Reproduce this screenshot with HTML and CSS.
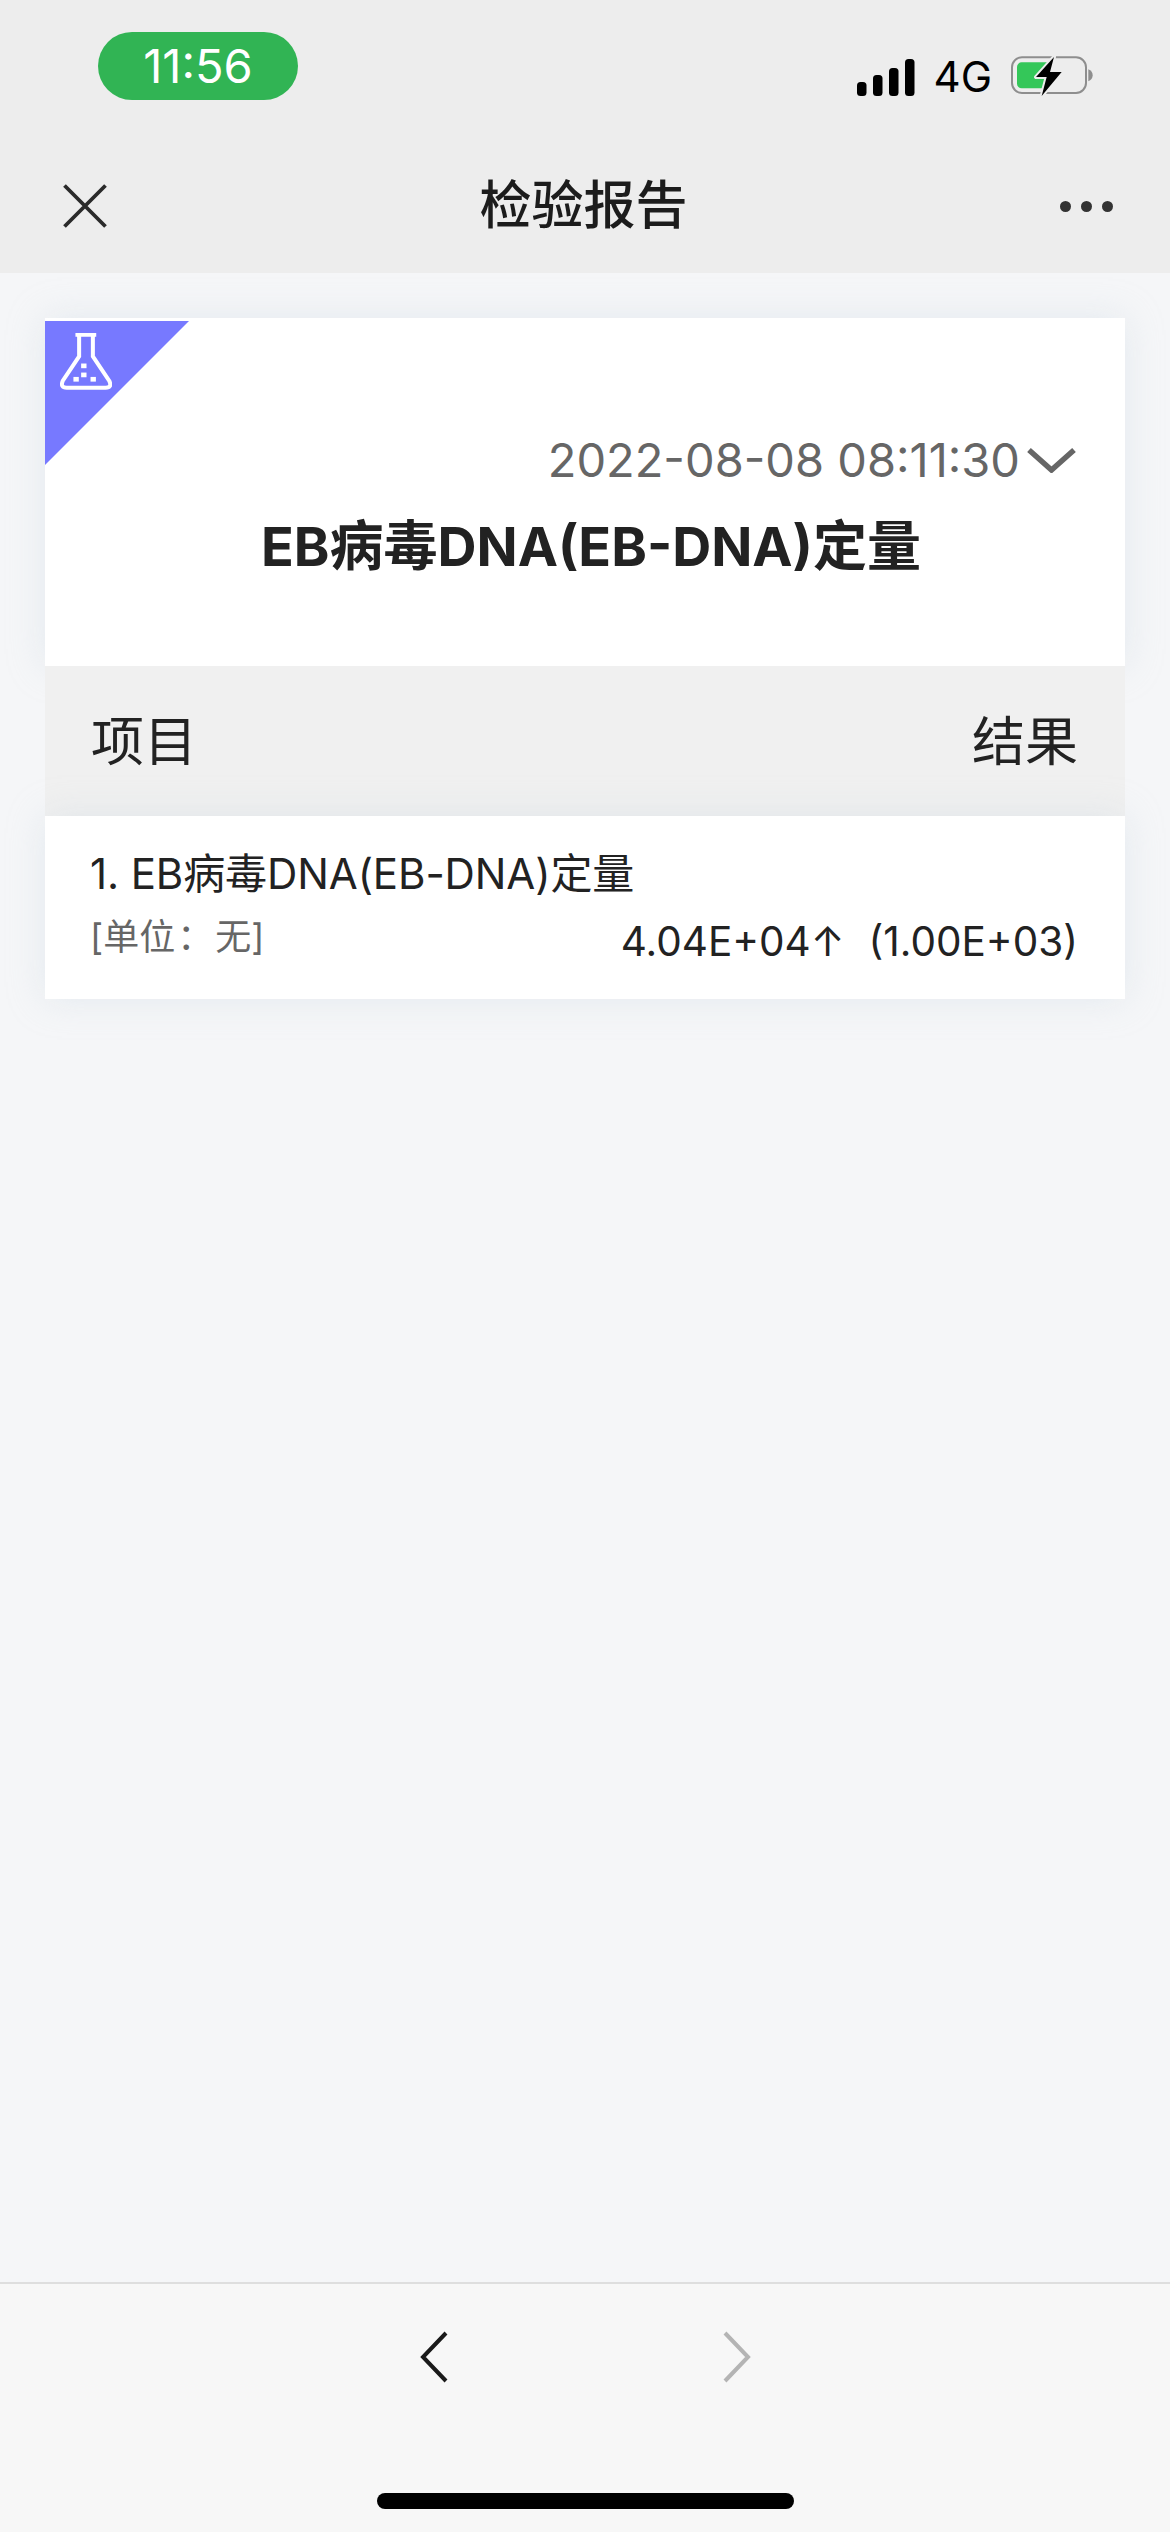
FILE: index.html
```html
<!DOCTYPE html>
<html lang="zh">
<head>
<meta charset="utf-8">
<title>检验报告</title>
<link rel="stylesheet" href="styles.css">
</head>
<body>
<div class="page">
  <header class="topbar">
    <div class="status">
      <div class="time">11:56</div>
      <div class="indicators">
        <svg class="signal" width="58" height="37" viewBox="0 0 58 37"><rect x="0" y="23" width="9.5" height="14" rx="3.5"/><rect x="16" y="16" width="9.5" height="21" rx="3.5"/><rect x="32" y="9" width="9.5" height="28" rx="3.5"/><rect x="48" y="0" width="9.5" height="37" rx="3.5"/></svg>
        <span class="network">4G</span>
        <svg class="battery" width="82" height="42" viewBox="0 0 246 126"><rect x="3" y="4" width="222" height="107" rx="30" fill="none" stroke="#8e8e8e" stroke-width="6"/><path d="M232 40c8 3 13 10 13 18s-5 15-13 18z" fill="#8e8e8e"/><rect x="18" y="19" width="105" height="78" rx="14" fill="#34c759"/><path d="M129 3 L75 63 H107 L92 120 L152 48 H117 Z" fill="#000" stroke="#ededed" stroke-width="12" paint-order="stroke" stroke-linejoin="round"/></svg>
      </div>
    </div>
    <nav class="nav">
      <svg class="close" width="44" height="44" viewBox="0 0 44 44"><path d="M1.500 1.500 42.500 42.500M42.500 1.500 1.500 42.500" stroke="#2a2a2a" stroke-width="3.800" fill="none"/></svg>
      <h1 class="nav-title">检验报告</h1>
      <div class="dots"><i></i><i></i><i></i></div>
    </nav>
  </header>

  <main class="content">
    <section class="card-head">
      <div class="ribbon">
        <svg class="flask" width="52" height="57" viewBox="90 100 155 170"><path d="M136 105H198M147 105V170L98 243Q90 263 110 263H226Q246 263 237 243L188 170V105" fill="none" stroke="#fff" stroke-width="12"/><g fill="#fff"><rect x="153" y="191" width="16" height="14"/><rect x="153" y="218" width="16" height="14"/><rect x="130" y="231" width="16" height="14"/><rect x="181" y="231" width="16" height="14"/></g></svg>
      </div>
      <div class="date-row">
        <span class="date">2022-08-08 08:11:30</span>
        <svg class="chev-down" width="49" height="26" viewBox="0 0 49 26"><path d="M2 3 24.500 23 47 3" fill="none" stroke="#666" stroke-width="5.500"/></svg>
      </div>
      <h2 class="report-title">EB病毒DNA(EB-DNA)定量</h2>
    </section>
    <section class="table-head">
      <span>项目</span>
      <span>结果</span>
    </section>
    <section class="row">
      <div class="row-name">1. EB病毒DNA(EB-DNA)定量</div>
      <div class="row-detail">
        <span class="unit">[单位<span class="unit-colon">：</span>无]</span>
        <span class="value">4.04E+04↑<span class="value-gap"></span>(1.00E+03)</span>
      </div>
    </section>
  </main>

  <footer class="toolbar">
    <div class="toolbar-btns">
      <svg width="28" height="52" viewBox="0 0 28 52"><path d="M26 2 3 26 26 50" fill="none" stroke="#1a1a1a" stroke-width="4"/></svg>
      <svg width="28" height="52" viewBox="0 0 28 52"><path d="M2 2 25 26 2 50" fill="none" stroke="#b4b4b4" stroke-width="4"/></svg>
    </div>
    <div class="home-bar"></div>
  </footer>
</div>
</body>
</html>
```
FILE: styles.css
```css
* { box-sizing: border-box; }
html, body { margin: 0; padding: 0; }
body {
  font-family: Inter, "Noto Sans CJK SC", sans-serif;
  color: #222;
  background: #f5f6f8;
}
.page {
  width: 1170px;
  height: 2532px;
  display: flex;
  flex-direction: column;
  overflow: hidden;
}
.topbar { height: 273px; background: #ededed; flex: none; }
.status {
  height: 133px;
  padding: 32px 77px 0 98px;
  display: flex;
  justify-content: space-between;
  align-items: flex-start;
}
.time {
  width: 200px;
  height: 68px;
  border-radius: 34px;
  background: #31b454;
  color: #fff;
  font-size: 47px;
  line-height: 68px;
  text-align: center;
}
.indicators {
  display: flex;
  align-items: center;
  gap: 19px;
  margin-top: 24px;
}
.network { font-size: 42px; line-height: 40px; color: #000; }
.nav {
  height: 140px;
  padding: 6px 57px 0 63px;
  display: flex;
  align-items: center;
  justify-content: space-between;
}
.nav-title {
  margin: 0;
  font-size: 52px;
  line-height: 60px;
  font-weight: 500;
  color: #1c1c1c;
}
.dots { display: flex; gap: 10px; width: 53px; }
.dots i { width: 11px; height: 11px; border-radius: 50%; background: #333; }

.content {
  flex: 1;
  padding: 45px 45px 0;
  background: #f5f6f8;
}
.card-head, .row { box-shadow: 0 0 34px rgba(200, 212, 224, .38); }
.card-head {
  position: relative;
  height: 348px;
  background: #fff;
  padding-top: 113px;
}
.ribbon {
  position: absolute;
  left: 0;
  top: 3px;
  width: 144px;
  height: 144px;
  background: #7779ff;
  clip-path: polygon(0 0, 100% 0, 0 100%);
}
.flask { position: absolute; left: 15px; top: 12px; }
.date-row {
  display: flex;
  justify-content: flex-end;
  align-items: center;
  gap: 7px;
  padding-right: 49px;
  height: 58px;
}
.date { font-size: 47px; line-height: 58px; color: #666; }
.report-title {
  margin: 24px 0 0;
  padding-left: 12px;
  text-align: center;
  font-size: 54px;
  line-height: 68px;
  font-weight: 700;
  color: #222;
}
.table-head {
  position: relative;
  height: 150px;
  background: #f0f0f0;
  padding: 0 47px 6px 46px;
  display: flex;
  align-items: center;
  justify-content: space-between;
  font-size: 53px;
  color: #222;
}
.row {
  position: relative;
  height: 183px;
  background: #fff;
  padding: 30px 47px 0 45px;
}
.row-name { font-size: 42px; line-height: 56px; color: #222; letter-spacing: -0.1px; }
.row-detail {
  display: flex;
  justify-content: space-between;
  align-items: flex-start;
  margin-top: 7px;
}
.unit { font-size: 36px; line-height: 50px; color: #666; }
.unit-colon { font-family: "Noto Sans CJK TC", sans-serif; margin: 0 2px; }
.value { font-size: 40.500px; line-height: 58px; color: #222; margin-top: 4px; }
.value-gap { display: inline-block; width: 24px; }

.toolbar {
  height: 250px;
  flex: none;
  background: #f7f7f7;
  border-top: 2px solid #dedede;
  position: relative;
}
.toolbar-btns {
  display: flex;
  justify-content: flex-start;
  gap: 275px;
  padding: 47px 0 0 420px;
}
.home-bar {
  position: absolute;
  left: 377px;
  top: 209px;
  width: 417px;
  height: 16px;
  border-radius: 8px;
  background: #000;
}
```
